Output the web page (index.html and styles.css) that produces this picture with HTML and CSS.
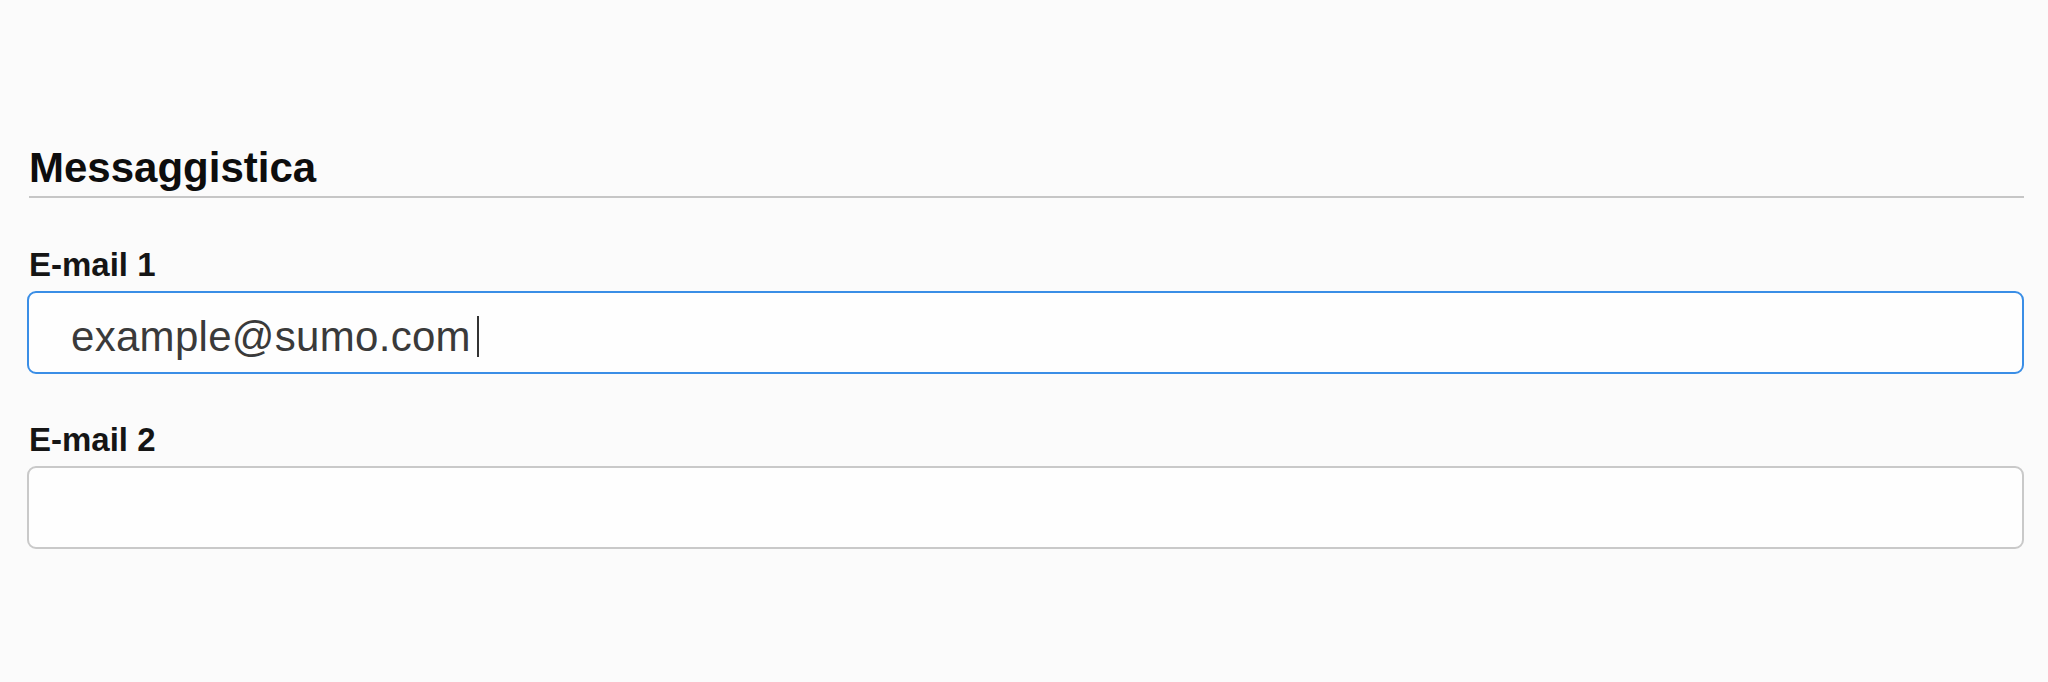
FILE: index.html
```html
<!DOCTYPE html>
<html lang="it">
<head>
  <meta charset="UTF-8" />
  <meta name="viewport" content="width=device-width, initial-scale=1.0"/>
  <title>Messaggistica</title>
  <link rel="stylesheet" href="styles.css">
</head>
<body>
  <section class="contact-section">
    <h2 class="section-title">Messaggistica</h2>

    <div class="form-row">
      <label class="field-label" for="email1">E-mail 1</label>
      <div class="field field-focus" id="email1">
        <span class="field-value">example@sumo.com</span><span class="caret"></span>
      </div>
    </div>

    <div class="form-row">
      <label class="field-label" for="email2">E-mail 2</label>
      <input class="field" type="email" id="email2">
    </div>
  </section>
</body>
</html>
```

FILE: styles.css
```css
body {
  margin: 0;
  background-color: #fbfbfb;
  font-family: "Liberation Sans", Arial, sans-serif;
  color: #0d0d0d;
}
.contact-section {
  padding: 147px 24px 0 27px;
}
.section-title {
  margin: 0 0 0 2px;
  padding-bottom: 7px;
  font-size: 42px;
  line-height: 42px;
  font-weight: bold;
  border-bottom: 2px solid #c6c6c6;
}
.form-row {
  margin-top: 50px;
}
.form-row + .form-row {
  margin-top: 49px;
}
.field-label {
  display: block;
  margin-left: 2px;
  font-size: 33px;
  line-height: 33px;
  font-weight: bold;
  color: #151515;
}
.field {
  display: flex;
  align-items: center;
  box-sizing: border-box;
  width: 100%;
  height: 83px;
  margin-top: 10px;
  padding: 0 42px;
  background-color: #fefefe;
  border: 2px solid #c9c9c9;
  border-radius: 9px;
  font-family: inherit;
  font-size: 42px;
  letter-spacing: 0.3px;
  color: #3a3a3a;
  outline: none;
}
.field-focus {
  border-color: #3a8ee6;
}
.field-value {
  padding-top: 9px;
}
.caret {
  display: inline-block;
  width: 2px;
  height: 41px;
  margin-left: 6px;
  margin-top: 8px;
  background-color: #333;
}
```
